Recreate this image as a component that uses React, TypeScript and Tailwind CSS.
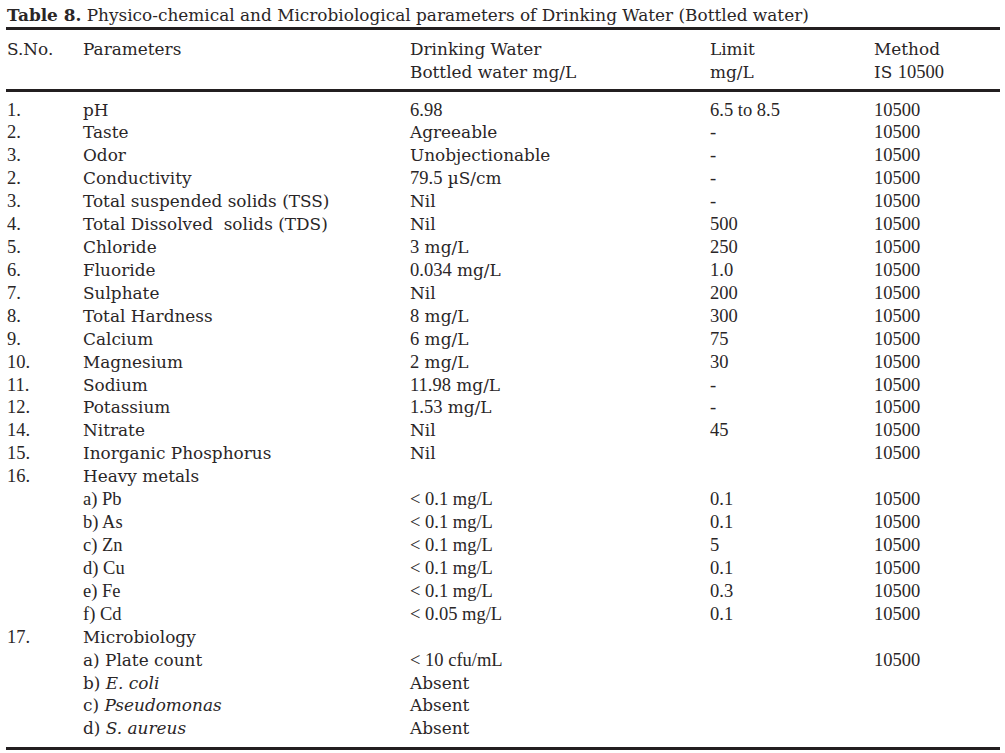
import type { ReactNode } from "react";

// Reference mixes a Palatino-like face for words with Times-like digits.
const num = "[font-family:'Liberation_Serif',serif] text-[18.5px]";

function fmt(s: string): ReactNode {
  return s.split(/(\d[\d.]*)/).map((p, i) =>
    /^\d/.test(p) ? (
      <span key={i} className={num}>
        {p}
      </span>
    ) : (
      p
    ),
  );
}

type Row = { n: string; p: ReactNode; v: string; l: string; m: string; times?: boolean; vt?: boolean };

const rows: Row[] = [
  { n: "1.", p: "pH", v: "6.98", l: "6.5 to 8.5", m: "10500" },
  { n: "2.", p: "Taste", v: "Agreeable", l: "-", m: "10500" },
  { n: "3.", p: "Odor", v: "Unobjectionable", l: "-", m: "10500" },
  { n: "2.", p: "Conductivity", v: "79.5 µS/cm", l: "-", m: "10500" },
  { n: "3.", p: "Total suspended solids (TSS)", v: "Nil", l: "-", m: "10500" },
  { n: "4.", p: "Total Dissolved\u00a0 solids (TDS)", v: "Nil", l: "500", m: "10500" },
  { n: "5.", p: "Chloride", v: "3 mg/L", l: "250", m: "10500" },
  { n: "6.", p: "Fluoride", v: "0.034 mg/L", l: "1.0", m: "10500" },
  { n: "7.", p: "Sulphate", v: "Nil", l: "200", m: "10500" },
  { n: "8.", p: "Total Hardness", v: "8 mg/L", l: "300", m: "10500" },
  { n: "9.", p: "Calcium", v: "6 mg/L", l: "75", m: "10500" },
  { n: "10.", p: "Magnesium", v: "2 mg/L", l: "30", m: "10500" },
  { n: "11.", p: "Sodium", v: "11.98 mg/L", l: "-", m: "10500" },
  { n: "12.", p: "Potassium", v: "1.53 mg/L", l: "-", m: "10500" },
  { n: "14.", p: "Nitrate", v: "Nil", l: "45", m: "10500" },
  { n: "15.", p: "Inorganic Phosphorus", v: "Nil", l: "", m: "10500" },
  { n: "16.", p: "Heavy metals", v: "", l: "", m: "" },
  { n: "", p: "a) Pb", v: "< 0.1 mg/L", l: "0.1", m: "10500", times: true },
  { n: "", p: "b) As", v: "< 0.1 mg/L", l: "0.1", m: "10500", times: true },
  { n: "", p: "c) Zn", v: "< 0.1 mg/L", l: "5", m: "10500", times: true },
  { n: "", p: "d) Cu", v: "< 0.1 mg/L", l: "0.1", m: "10500", times: true },
  { n: "", p: "e) Fe", v: "< 0.1 mg/L", l: "0.3", m: "10500", times: true },
  { n: "", p: "f) Cd", v: "< 0.05 mg/L", l: "0.1", m: "10500", times: true },
  { n: "17.", p: "Microbiology", v: "", l: "", m: "" },
  { n: "", p: "a) Plate count", v: "< 10 cfu/mL", l: "", m: "10500", vt: true },
  { n: "", p: <>b) <i>E. coli</i></>, v: "Absent", l: "", m: "" },
  { n: "", p: <>c) <i>Pseudomonas</i></>, v: "Absent", l: "", m: "" },
  { n: "", p: <>d) <i>S. aureus</i></>, v: "Absent", l: "", m: "" },
];

const cols = "grid grid-cols-[76px_327px_300px_164px_1fr]";

function Rule() {
  return <div className="h-[3px] w-[994px] bg-[#231f20]" />;
}

export default function App() {
  return (
    <div className="min-h-[753px] w-[1005px] bg-white px-[6px] pt-[4px] text-[16.9px] leading-[23px] text-[#2a2627] [font-family:'DejaVu_Serif',serif]">
      <div className="pl-[1px]">
        <b>Table 8.</b> Physico-chemical and Microbiological parameters of Drinking Water (Bottled water)
      </div>
      <Rule />
      <div className={`${cols} pl-[1px] pt-[7.5px] pb-[5.5px]`}>
        <div>S.No.</div>
        <div>Parameters</div>
        <div>
          Drinking Water
          <br />
          Bottled water mg/L
        </div>
        <div>
          Limit
          <br />
          mg/L
        </div>
        <div>
          Method
          <br />
          IS {fmt("10500")}
        </div>
      </div>
      <Rule />
      <div className="pl-[1px] pt-[6.5px] pb-[6.5px]">
        {rows.map((r, i) => (
          <div key={i} className={`${cols} h-[22.93px]`}>
            <div className={num}>{r.n}</div>
            <div className={r.times ? num : ""}>{r.p}</div>
            <div className={r.times || r.vt ? num : ""}>{fmt(r.v)}</div>
            <div className={num}>{r.l}</div>
            <div className={num}>{r.m}</div>
          </div>
        ))}
      </div>
      <Rule />
    </div>
  );
}
